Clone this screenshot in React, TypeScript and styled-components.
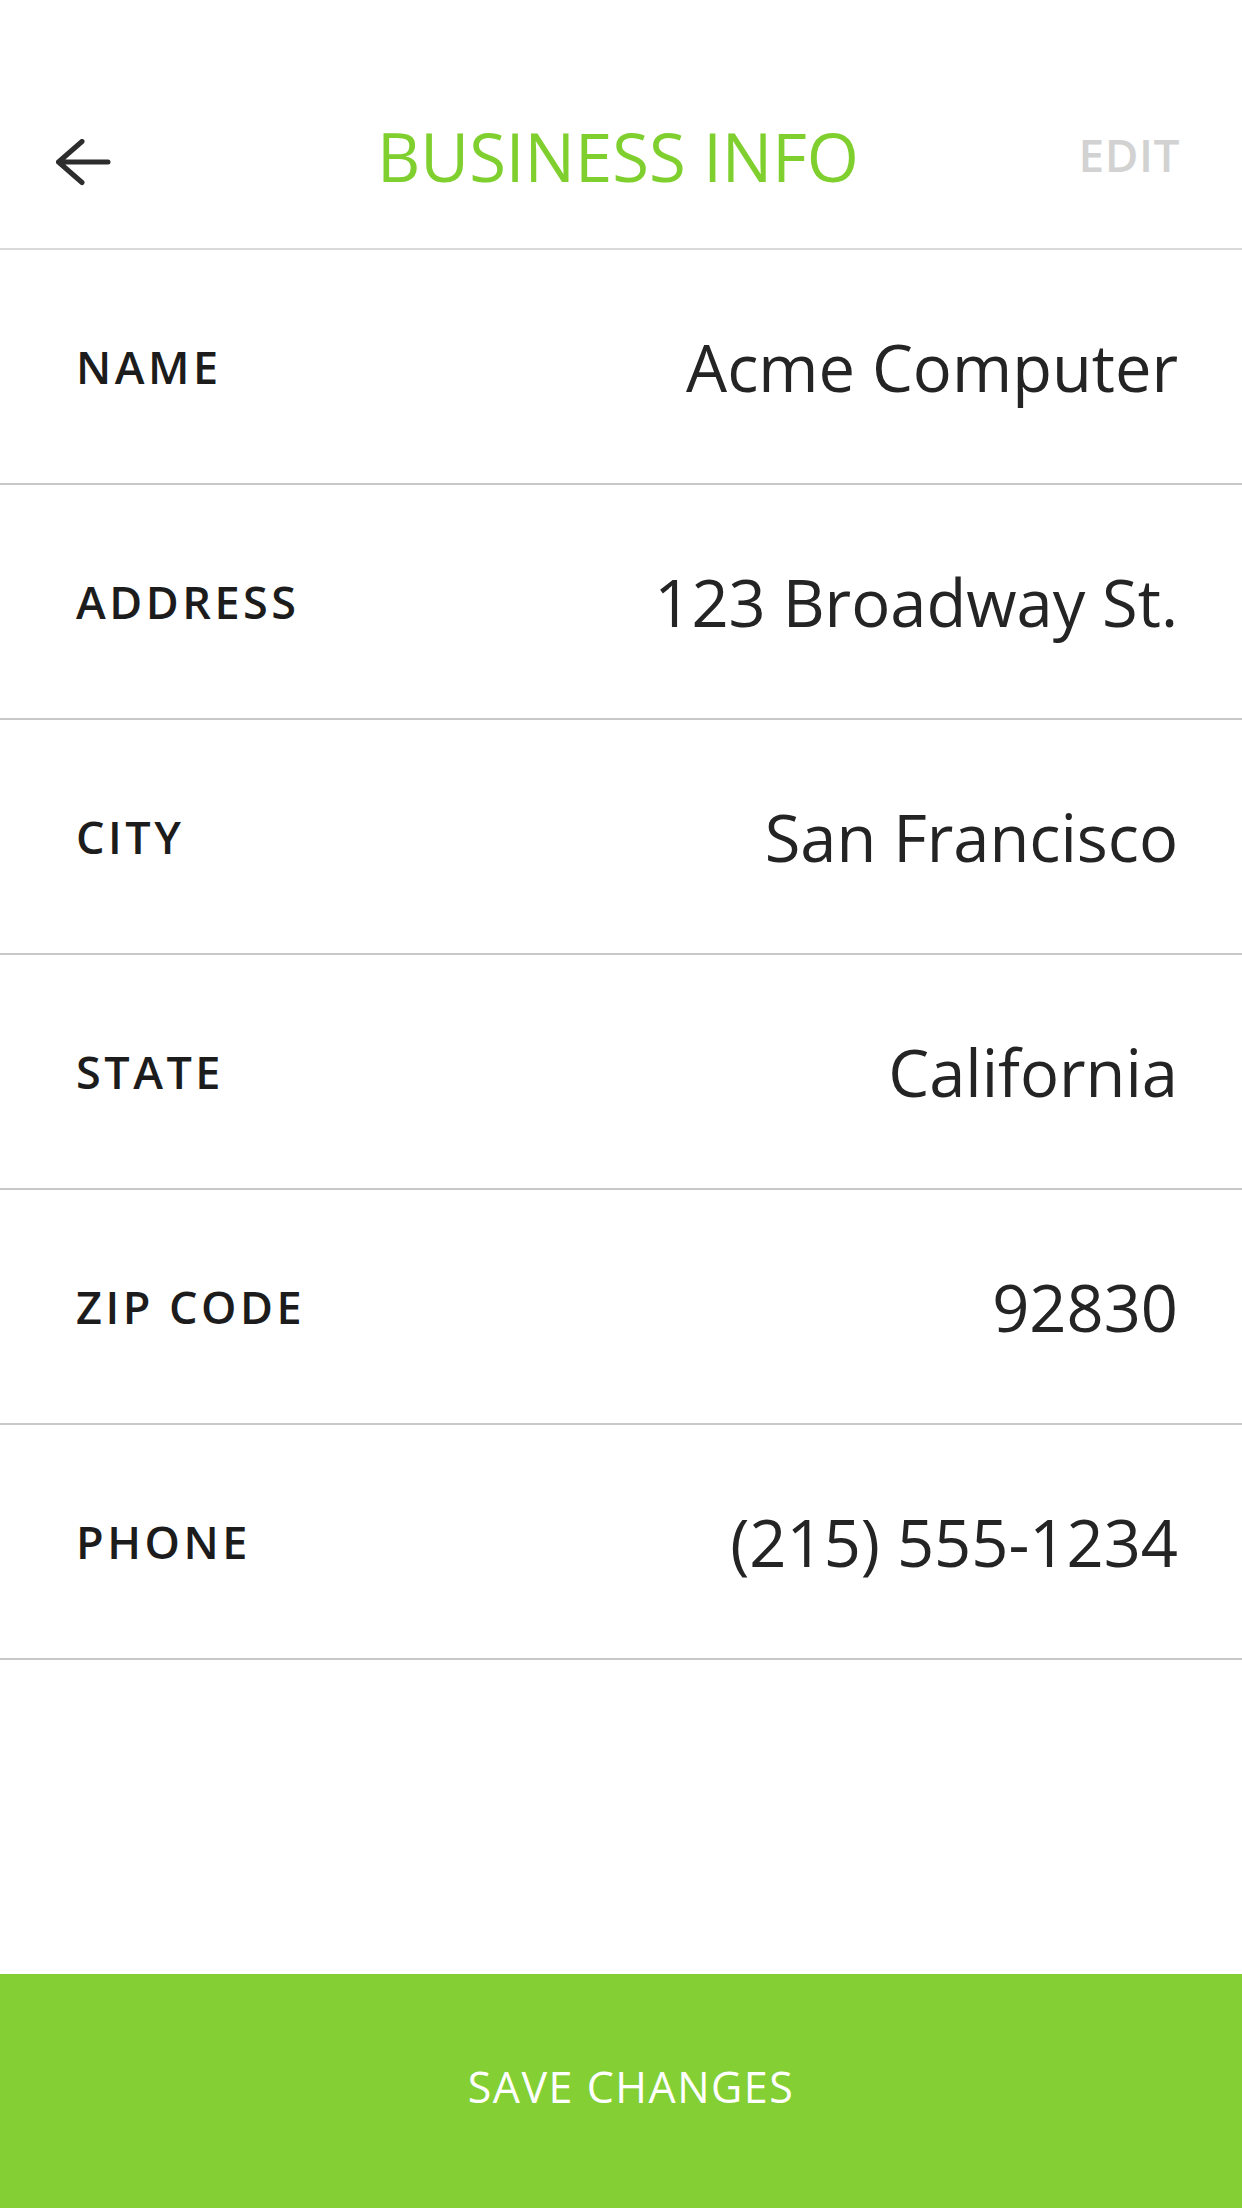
import React from "react";
import styled, { createGlobalStyle } from "styled-components";

const GlobalStyle = createGlobalStyle`
  html, body {
    margin: 0;
    padding: 0;
    background: #ffffff;
  }
  body {
    font-family: "Open Sans", "Noto Sans", "Liberation Sans", sans-serif;
    -webkit-font-smoothing: antialiased;
  }
  * { box-sizing: border-box; }
`;

const Screen = styled.div`
  width: 1242px;
  height: 2208px;
  display: flex;
  flex-direction: column;
  background: #ffffff;
`;

const Header = styled.header`
  height: 250px;
  padding: 64px 62px 0 56px;
  display: grid;
  grid-template-columns: 1fr auto 1fr;
  align-items: center;
  border-bottom: 2px solid #d9d9d9;
`;

const BackButton = styled.button`
  justify-self: start;
  display: flex;
  padding: 0;
  margin-top: 14px;
  border: none;
  background: none;
  cursor: pointer;
`;

const Title = styled.h1`
  margin: 0;
  font-size: 67px;
  line-height: 1;
  font-weight: 400;
  color: #7fcf2e;
  letter-spacing: 0;
`;

const EditButton = styled.button`
  justify-self: end;
  margin-bottom: 4px;
  padding: 0;
  border: none;
  background: none;
  font-family: inherit;
  font-size: 46px;
  line-height: 1;
  font-weight: 600;
  color: #d2d2d2;
  letter-spacing: 0.5px;
`;

const List = styled.dl`
  margin: 0;
  display: flex;
  flex-direction: column;
`;

const Row = styled.div`
  height: 235px;
  padding: 0 64px 0 76px;
  display: flex;
  align-items: center;
  justify-content: space-between;
  border-bottom: 2px solid #c8c8c8;
`;

const Label = styled.dt`
  margin: 0;
  font-size: 45px;
  font-weight: 600;
  letter-spacing: 3.5px;
  color: #1c1c1c;
  text-transform: uppercase;
`;

const Value = styled.dd`
  margin: 0;
  font-size: 65px;
  font-weight: 400;
  color: #242424;
  text-align: right;
`;

const Spacer = styled.div`
  flex: 1;
`;

const SaveButton = styled.button`
  height: 234px;
  width: 100%;
  border: none;
  padding: 0 0 10px 20px;
  background: #84d034;
  color: #ffffff;
  font-family: inherit;
  font-size: 43px;
  font-weight: 400;
  letter-spacing: 1.5px;
  display: flex;
  align-items: center;
  justify-content: center;
`;

const fields: { label: string; value: string }[] = [
  { label: "Name", value: "Acme Computer" },
  { label: "Address", value: "123 Broadway St." },
  { label: "City", value: "San Francisco" },
  { label: "State", value: "California" },
  { label: "Zip Code", value: "92830" },
  { label: "Phone", value: "(215) 555-1234" },
];

const BackArrow = () => (
  <svg width="56" height="48" viewBox="0 0 56 48" fill="none">
    <path
      d="M2.5 23 H52 M26 2.5 L2.5 23 L26 43.5"
      stroke="#2d2d2d"
      strokeWidth="5"
      strokeLinecap="round"
      strokeLinejoin="round"
    />
  </svg>
);

export default function App() {
  return (
    <>
      <GlobalStyle />
      <Screen>
        <Header>
          <BackButton aria-label="Back">
            <BackArrow />
          </BackButton>
          <Title>BUSINESS INFO</Title>
          <EditButton>EDIT</EditButton>
        </Header>
        <List>
          {fields.map((f) => (
            <Row key={f.label}>
              <Label>{f.label}</Label>
              <Value>{f.value}</Value>
            </Row>
          ))}
        </List>
        <Spacer />
        <SaveButton>SAVE CHANGES</SaveButton>
      </Screen>
    </>
  );
}
